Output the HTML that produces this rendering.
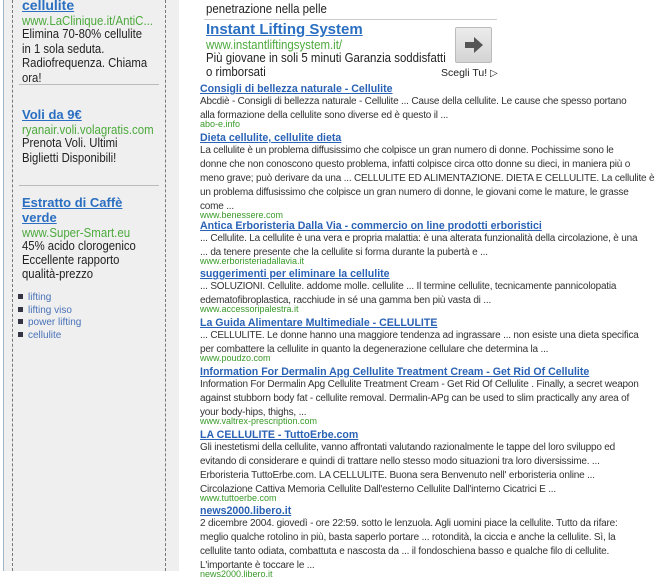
<!DOCTYPE html>
<html><head><meta charset="utf-8"><style>
body{margin:0;width:665px;height:571px;overflow:hidden;background:#fff;font-family:"Liberation Sans",Arial,sans-serif;position:relative}
.side{position:absolute;left:3px;top:0;width:175px;height:571px;background:#efefef;border-left:1px solid #9fb5c8}
.dl{position:absolute;top:0;height:571px;border-left:1px dashed #777}
.a{position:absolute;white-space:nowrap;transform-origin:left top}
.st{font-size:13px;font-weight:bold;color:#2a6fc2;text-decoration:underline}
.su{font-size:13px;color:#4caa3c;transform:scaleX(0.88)}
.sb{font-size:13px;color:#222;transform:scaleX(0.87)}
.hr{position:absolute;height:1px;background:#bbb}
.r{position:absolute;left:200px;width:445px}
.t{font-size:10.6px;line-height:12px;font-weight:bold;color:#2a62b5;text-decoration:underline;white-space:nowrap}
.s{font-size:10px;letter-spacing:-0.2px;line-height:14px;color:#333;white-space:nowrap}
.u{font-size:9px;line-height:10px;color:#3a9a2a;margin-top:-4px}
ul{margin:0;padding:0;list-style:none}
li{font-size:10px;color:#4a72b8;line-height:12.5px}
li:before{content:"";display:inline-block;width:5px;height:5px;background:#334;margin:0 5px 1px 0}
</style></head><body>
<div class="side"></div>
<div class="dl" style="left:12px"></div>
<div class="dl" style="left:165px"></div>

<div class="a st" style="left:22px;top:-3px;font-size:14px">cellulite</div>
<div class="a su" style="left:22px;top:13px">www.LaClinique.it/AntiC...</div>
<div class="a sb" style="left:22px;top:27px;line-height:14.5px">Elimina 70-80% cellulite<br>in 1 sola seduta.<br>Radiofrequenza. Chiama<br>ora!</div>
<div class="hr" style="left:19px;width:140px;top:84px"></div>
<div class="a st" style="left:22px;top:107px">Voli da 9€</div>
<div class="a su" style="left:22px;top:122px">ryanair.voli.volagratis.com</div>
<div class="a sb" style="left:22px;top:136px;line-height:14.5px">Prenota Voli. Ultimi<br>Biglietti Disponibili!</div>
<div class="hr" style="left:19px;width:140px;top:185px"></div>
<div class="a st" style="left:22px;top:195px;line-height:15px">Estratto di Caffè<br>verde</div>
<div class="a su" style="left:22px;top:225px">www.Super-Smart.eu</div>
<div class="a sb" style="left:22px;top:239px;line-height:14px">45% acido clorogenico<br>Eccellente rapporto<br>qualità-prezzo</div>
<ul class="a" style="left:18px;top:292px"><li>lifting</li><li>lifting viso</li><li>power lifting</li><li>cellulite</li></ul>

<div class="a" style="left:206px;top:1px;font-size:13px;color:#222;transform:scaleX(0.88)">penetrazione nella pelle</div>
<div class="hr" style="left:204px;width:293px;top:19px;background:#ccc"></div>
<div class="a" style="left:206px;top:21px;font-size:15px;font-weight:bold;color:#2a6fc2;text-decoration:underline">Instant Lifting System</div>
<div class="a su" style="left:206px;top:37px">www.instantliftingsystem.it/</div>
<div class="a" style="left:206px;top:51px;line-height:14px;font-size:13px;color:#222;transform:scaleX(0.88)">Più giovane in soli 5 minuti Garanzia soddisfatti<br>o rimborsati</div>
<div class="a" style="left:455px;top:27px;width:35px;height:34px;background:linear-gradient(#ececec,#d4d4d4);border:1px solid #bbb;border-radius:2px">
<svg width="35" height="34" viewBox="0 0 35 34"><path d="M9 14h9v-5l9 8-9 8v-5H9z" fill="#555"/></svg></div>
<div class="a" style="left:441px;top:67px;font-size:10.5px;color:#222">Scegli Tu! <span style="font-size:10px">▷</span></div>

<div class="r" style="top:83px"><div class="t">Consigli di bellezza naturale - Cellulite</div><div class="s">Abcdiè - Consigli di bellezza naturale - Cellulite ... Cause della cellulite. Le cause che spesso portano<br>alla formazione della cellulite sono diverse ed è questo il ...</div><div class="u">abo-e.info</div></div>
<div class="r" style="top:132px"><div class="t">Dieta cellulite, cellulite dieta</div><div class="s">La cellulite è un problema diffusissimo che colpisce un gran numero di donne. Pochissime sono le<br>donne che non conoscono questo problema, infatti colpisce circa otto donne su dieci, in maniera più o<br>meno grave; può derivare da una ... CELLULITE ED ALIMENTAZIONE. DIETA E CELLULITE. La cellulite è<br>un problema diffusissimo che colpisce un gran numero di donne, le giovani come le mature, le grasse<br>come ...</div><div class="u">www.benessere.com</div></div>
<div class="r" style="top:220px"><div class="t">Antica Erboristeria Dalla Via - commercio on line prodotti erboristici</div><div class="s">... Cellulite. La cellulite è una vera e propria malattia: è una alterata funzionalità della circolazione, è una<br>... da tenere presente che la cellulite si forma durante la pubertà e ...</div><div class="u">www.erboristeriadallavia.it</div></div>
<div class="r" style="top:268px"><div class="t">suggerimenti per eliminare la cellulite</div><div class="s">... SOLUZIONI. Cellulite. addome molle. cellulite ... Il termine cellulite, tecnicamente pannicolopatia<br>edematofibroplastica, racchiude in sé una gamma ben più vasta di ...</div><div class="u">www.accessoripalestra.it</div></div>
<div class="r" style="top:317px"><div class="t">La Guida Alimentare Multimediale - CELLULITE</div><div class="s">... CELLULITE. Le donne hanno una maggiore tendenza ad ingrassare ... non esiste una dieta specifica<br>per combattere la cellulite in quanto la degenerazione cellulare che determina la ...</div><div class="u">www.poudzo.com</div></div>
<div class="r" style="top:366px"><div class="t">Information For Dermalin Apg Cellulite Treatment Cream - Get Rid Of Cellulite</div><div class="s">Information For Dermalin Apg Cellulite Treatment Cream - Get Rid Of Cellulite . Finally, a secret weapon<br>against stubborn body fat - cellulite removal. Dermalin-APg can be used to slim practically any area of<br>your body-hips, thighs, ...</div><div class="u">www.valtrex-prescription.com</div></div>
<div class="r" style="top:429px"><div class="t">LA CELLULITE - TuttoErbe.com</div><div class="s">Gli inestetismi della cellulite, vanno affrontati valutando razionalmente le tappe del loro sviluppo ed<br>evitando di considerare e quindi di trattare nello stesso modo situazioni tra loro diversissime. ...<br>Erboristeria TuttoErbe.com. LA CELLULITE. Buona sera Benvenuto nell' erboristeria online ...<br>Circolazione Cattiva Memoria Cellulite Dall'esterno Cellulite Dall'interno Cicatrici E ...</div><div class="u">www.tuttoerbe.com</div></div>
<div class="r" style="top:505px"><div class="t">news2000.libero.it</div><div class="s">2 dicembre 2004. giovedì - ore 22:59. sotto le lenzuola. Agli uomini piace la cellulite. Tutto da rifare:<br>meglio qualche rotolino in più, basta saperlo portare ... rotondità, la ciccia e anche la cellulite. Sì, la<br>cellulite tanto odiata, combattuta e nascosta da ... il fondoschiena basso e qualche filo di cellulite.<br>L'importante è toccare le ...</div><div class="u">news2000.libero.it</div></div>
</body></html>
